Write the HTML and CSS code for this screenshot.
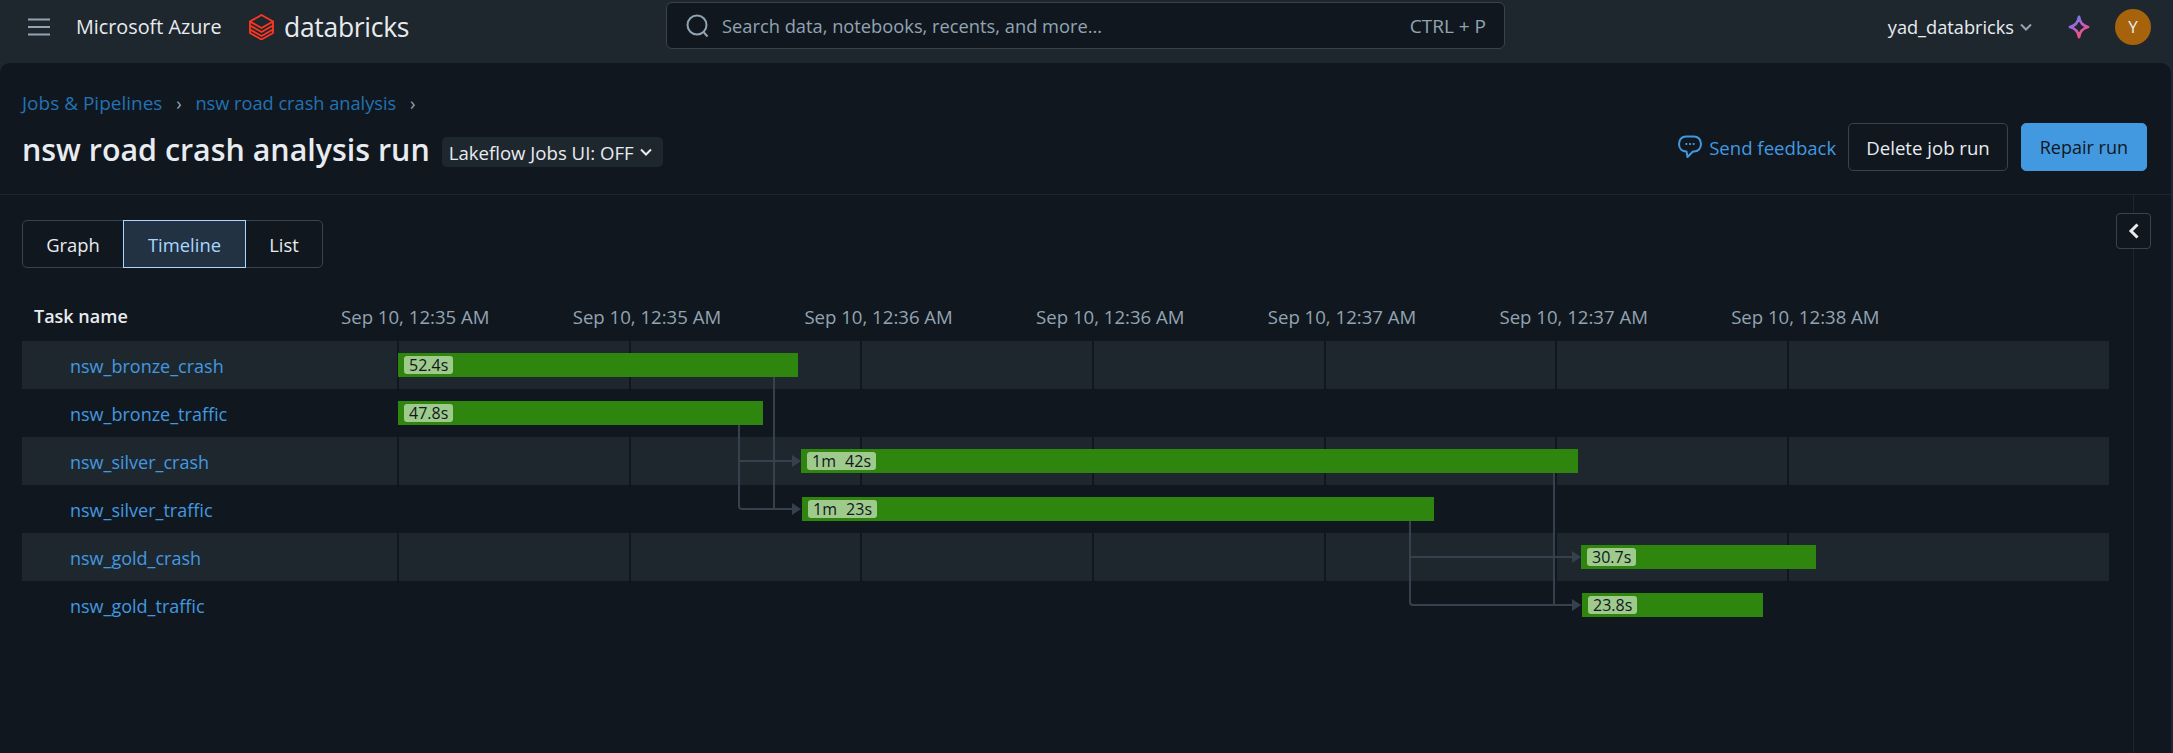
FILE: index.html
```html
<!DOCTYPE html>
<html lang="en">
<head>
    <meta charset="UTF-8">
    <meta name="viewport" content="width=device-width, initial-scale=1.0">
    <title>nsw road crash analysis run</title>
    <link rel="stylesheet" href="styles.css">
</head>
<body>

    <header class="topbar">
        <div class="topbar-left">
            <svg class="menu-icon" width="22" height="18" viewBox="0 0 22 18"><path d="M0 1.500h22M0 9h22M0 16.500h22" stroke="#92a4b3" stroke-width="2" fill="none"/></svg>
            <span class="cloud-name">Microsoft Azure</span>
            <svg class="logo-icon" width="25" height="26" viewBox="0 0 25 26" fill="none" stroke="#ff3621" stroke-width="1.800"><path d="M12.500 1 24 7.500 12.500 14 1 7.500z"/><path d="M1 7.500v4l11.500 6.500L24 11.500v-4"/><path d="M1 11.500v4l11.500 6.500L24 15.500v-4"/><path d="M1 15.500v3.500l11.500 6.500L24 19v-3.500"/></svg>
            <span class="brand-name">databricks</span>
        </div>
        <div class="search">
            <svg width="24" height="24" viewBox="0 0 24 24" fill="none" stroke="#92a4b3" stroke-width="2"><circle cx="11" cy="11" r="9.500"/><path d="m17.500 18 4 4.500"/></svg>
            <span class="search-text">Search data, notebooks, recents, and more...</span>
            <span class="search-key">CTRL + P</span>
        </div>
        <div class="topbar-right">
            <span class="workspace">yad_databricks</span>
            <svg width="12" height="8" viewBox="0 0 12 8" fill="none" stroke="#92a4b3" stroke-width="2"><path d="m1 1.500 5 5 5-5"/></svg>
            <svg class="spark" width="22" height="24" viewBox="0 0 22 24" fill="none" stroke="url(#sparkGrad)" stroke-width="2.800"><defs><linearGradient id="sparkGrad" x1="0" y1="0" x2="0.600" y2="1"><stop offset="0" stop-color="#4a8fe8"/><stop offset="0.500" stop-color="#b45fd8"/><stop offset="1" stop-color="#ff4f6d"/></linearGradient></defs><path d="M11 2c1 5.500 3 8.500 9 10-6 1.500-8 4.500-9 10-1-5.500-3-8.500-9-10 6-1.500 8-4.500 9-10z" stroke-linejoin="round"/></svg>
            <span class="avatar">Y</span>
        </div>
    </header>

    <main class="panel">
        <section class="page-head">
            <div class="breadcrumb">
                <a class="crumb-root">Jobs &amp; Pipelines</a><span class="sep">›</span><a>nsw road crash analysis</a><span class="sep">›</span>
            </div>
            <div class="title-row">
                <h1>nsw road crash analysis run</h1>
                <span class="chip-select">Lakeflow Jobs UI: OFF
                    <svg width="12" height="8" viewBox="0 0 12 8" fill="none" stroke="#e8ecf0" stroke-width="2"><path d="m1 1.500 5 5 5-5"/></svg>
                </span>
                <div class="actions">
                    <a class="feedback">
                        <svg width="24" height="24" viewBox="0 0 24 24" fill="none" stroke="#4299e0" stroke-width="2"><path d="M8 1.500h8c4 0 7 3 7 7.500s-3 7.500-7 7.500h-1l-5.500 5.500-1-5.500C4 16.500 1 13.500 1 9s3-7.500 7-7.500z" stroke-linejoin="round"/><path d="M7.500 9h1.800M11.100 9h1.800M14.700 9h1.800"/></svg>
                        Send feedback
                    </a>
                    <button class="btn">Delete job run</button>
                    <button class="btn btn-primary">Repair run</button>
                </div>
            </div>
        </section>

        <section class="body">
            <div class="content">
                <div class="tabs">
                    <button class="tab tab-graph">Graph</button>
                    <button class="tab tab-timeline active">Timeline</button>
                    <button class="tab tab-list">List</button>
                </div>

                <div class="timeline">
                    <div class="axis">
                        <div class="axis-title">Task name</div>
                        <div class="axis-label">Sep 10, 12:35 AM</div>
                        <div class="axis-label">Sep 10, 12:35 AM</div>
                        <div class="axis-label">Sep 10, 12:36 AM</div>
                        <div class="axis-label">Sep 10, 12:36 AM</div>
                        <div class="axis-label">Sep 10, 12:37 AM</div>
                        <div class="axis-label">Sep 10, 12:37 AM</div>
                        <div class="axis-label">Sep 10, 12:38 AM</div>
                    </div>

                    <div class="rows">
                        <div class="row stripe">
                            <a class="task-name">nsw_bronze_crash</a>
                            <div class="track">
                                <i></i><i></i><i></i><i></i><i></i><i></i><i></i>
                                <div class="bar" style="left: 1px; width: 400px;"><span class="dur">52.4s</span></div>
                            </div>
                        </div>
                        <div class="row">
                            <a class="task-name">nsw_bronze_traffic</a>
                            <div class="track">
                                <div class="bar" style="left: 1px; width: 365px;"><span class="dur">47.8s</span></div>
                            </div>
                        </div>
                        <div class="row stripe">
                            <a class="task-name">nsw_silver_crash</a>
                            <div class="track">
                                <i></i><i></i><i></i><i></i><i></i><i></i><i></i>
                                <div class="bar" style="left: 404px; width: 777px;"><span class="dur">1m 42s</span></div>
                            </div>
                        </div>
                        <div class="row">
                            <a class="task-name">nsw_silver_traffic</a>
                            <div class="track">
                                <div class="bar" style="left: 405px; width: 632px;"><span class="dur">1m 23s</span></div>
                            </div>
                        </div>
                        <div class="row stripe">
                            <a class="task-name">nsw_gold_crash</a>
                            <div class="track">
                                <i></i><i></i><i></i><i></i><i></i><i></i><i></i>
                                <div class="bar" style="left: 1184px; width: 235px;"><span class="dur">30.7s</span></div>
                            </div>
                        </div>
                        <div class="row">
                            <a class="task-name">nsw_gold_traffic</a>
                            <div class="track">
                                <div class="bar" style="left: 1185px; width: 181px;"><span class="dur">23.8s</span></div>
                            </div>
                        </div>

                        <!-- dependency arrows, drawn over the rows (origin is the rows' top left) -->
                        <svg class="links" width="2087" height="288" fill="none" stroke="#36414d" stroke-width="2">
                            <path d="M752 36V168H770"/>
                            <path d="M717 84V165q0 3 3 3H770"/>
                            <path d="M717 120H770"/>
                            <path d="M1532 132V264H1550"/>
                            <path d="M1388 180V261q0 3 3 3H1550"/>
                            <path d="M1388 216H1550"/>
                            <path d="M770 114l9 6-9 6zM770 162l9 6-9 6zM1550 210l9 6-9 6zM1550 258l9 6-9 6z" fill="#36414d" stroke="none"/>
                        </svg>
                    </div>
                </div>
            </div>
            <aside class="side">
                <button class="collapse">
                    <svg width="12" height="16" viewBox="0 0 12 16" fill="none" stroke="#e8ecf0" stroke-width="3"><path d="M9.500 1.500 3 8l6.500 6.500"/></svg>
                </button>
            </aside>
        </section>
    </main>

</body>
</html>
```

FILE: styles.css
```css
* {
    box-sizing: border-box;
}

html, body {
    margin: 0;
    height: 100%;
}

body {
    height: 753px;
    overflow: hidden;
    background-color: #1f272e;
    color: #e8ecf0;
    font-family: "Open Sans", "Noto Sans", Arial, sans-serif;
    font-size: 17px;
    display: flex;
    flex-direction: column;
}

a {
    text-decoration: none;
}

/* top bar */
.topbar {
    height: 63px;
    flex-shrink: 0;
    display: grid;
    grid-template-columns: 666px 839px 1fr;
    align-items: start;
}

.topbar-left {
    display: flex;
    align-items: center;
    height: 53px;
    padding-left: 28px;
}

.cloud-name {
    margin-left: 26px;
    font-size: 19.800px;
    width: 173px;
    white-space: nowrap;
}

.logo-icon {
    flex-shrink: 0;
}

.brand-name {
    margin-left: 10px;
    font-size: 26.500px;
    font-weight: 500;
    letter-spacing: -0.3px;
    color: #e8ecf0;
}

.search {
    margin-top: 2px;
    height: 47px;
    display: flex;
    align-items: center;
    padding: 0 18px 0 19px;
    background-color: #11171e;
    border: 1px solid #37444f;
    border-radius: 6px;
    color: #92a4b3;
    font-size: 18.300px;
}

.search-text {
    margin-left: 12px;
    flex: 1;
}

.search-key {
    font-size: 19px;
}

.topbar-right {
    height: 53px;
    display: flex;
    align-items: center;
    justify-content: flex-end;
    padding-right: 22px;
}

.workspace {
    font-size: 18.200px;
    margin-right: 6px;
}

.spark {
    margin-left: 36px;
}

.avatar {
    width: 36px;
    height: 36px;
    margin-left: 25px;
    border-radius: 50%;
    background-color: #a6630c;
    display: flex;
    align-items: center;
    justify-content: center;
    font-size: 17px;
}

/* main panel */
.panel {
    flex: 1;
    min-height: 0;
    margin-right: 2px;
    background-color: #11171e;
    border-radius: 10px 10px 0 0;
    display: flex;
    flex-direction: column;
}

.page-head {
    height: 132px;
    padding: 25px 24px 0 22px;
    border-bottom: 1px solid #1f272e;
    flex-shrink: 0;
}

.breadcrumb {
    display: flex;
    align-items: center;
    height: 30px;
    font-size: 18.200px;
}

.breadcrumb a {
    color: #2272b4;
}

.breadcrumb .crumb-root {
    font-size: 19px;
}

.breadcrumb .sep {
    width: 33px;
    text-align: center;
    color: #92a4b3;
}

.title-row {
    display: flex;
    align-items: center;
    height: 48px;
    margin-top: 7px;
}

h1 {
    margin: 0;
    font-size: 30.400px;
    font-weight: 600;
    color: #e8ecf0;
}

.chip-select {
    margin-left: 12px;
    margin-top: 6px;
    height: 30px;
    padding: 0 11px 0 7px;
    display: flex;
    align-items: center;
    gap: 6px;
    background-color: #1f272e;
    border-radius: 5px;
    font-size: 18.600px;
}

.actions {
    margin-left: auto;
    margin-top: -4px;
    display: flex;
    align-items: center;
}

.feedback {
    display: flex;
    align-items: center;
    gap: 7px;
    margin-right: 12px;
    color: #4299e0;
    font-size: 18.600px;
}

.btn {
    height: 48px;
    padding: 0 17px;
    background-color: transparent;
    border: 1px solid #37444f;
    border-radius: 5px;
    color: #e8ecf0;
    font: inherit;
    font-size: 18.600px;
}

.btn-primary {
    margin-left: 13px;
    padding: 0 18px;
    font-size: 18px;
    background-color: #4299e0;
    border-color: #4299e0;
    color: #11171e;
}

/* tabs + timeline */
.body {
    flex: 1;
    min-height: 0;
    display: flex;
}

.content {
    width: 2109px;
    padding: 25px 0 0 22px;
}

.tabs {
    display: flex;
    height: 48px;
}

.tab {
    background-color: transparent;
    border: 1px solid #37444f;
    margin-left: -1px;
    color: #e8ecf0;
    font: inherit;
    font-size: 18.400px;
}

.tab-graph {
    width: 102px;
    margin-left: 0;
    border-radius: 5px 0 0 5px;
}

.tab-timeline {
    width: 123px;
}

.tab-list {
    width: 78px;
    border-radius: 0 5px 5px 0;
}

.tab.active {
    position: relative;
    background-color: #223243;
    border-color: #a8d8ff;
    color: #a8d8ff;
}

.timeline {
    margin-top: 25px;
}

.axis {
    display: flex;
    align-items: center;
    height: 48px;
    padding-bottom: 2px;
}

.axis-title {
    width: 319px;
    padding-left: 12px;
    font-size: 18px;
    font-weight: 600;
}

.axis-label {
    width: 231.700px;
    font-size: 18.600px;
    color: #92a4b3;
}

.rows {
    position: relative;
}

.row {
    display: flex;
    height: 48px;
}

.stripe {
    background-color: #1f272e;
}

.task-name {
    width: 375px;
    padding-left: 48px;
    line-height: 50px;
    color: #4299e0;
    font-size: 18px;
}

.track {
    position: relative;
    flex: 1;
    display: flex;
}

.track i {
    width: 231.700px;
    border-left: 2px solid #11171e;
}

.track i:last-of-type {
    flex: 1;
}

.bar {
    position: absolute;
    top: 12px;
    height: 24px;
    padding: 3px 6px;
    background-color: #2f860f;
}

.dur {
    display: block;
    width: max-content;
    height: 18px;
    padding: 0 5px;
    line-height: 18px;
    background-color: #9ecb8c;
    border-radius: 3px;
    color: #11171e;
    font-size: 16px;
    word-spacing: 5px;
}

.links {
    position: absolute;
    top: 0;
    left: 0;
    pointer-events: none;
}

.side {
    width: 62px;
    padding-top: 18px;
    position: relative;
}

.side::before {
    content: "";
    position: absolute;
    top: 0;
    bottom: 0;
    left: 24px;
    border-left: 1px solid #1f272e;
}

.collapse {
    position: relative;
    width: 35px;
    height: 36px;
    margin-left: 7px;
    display: flex;
    align-items: center;
    justify-content: center;
    padding: 0;
    background-color: #11171e;
    border: 1px solid #37444f;
    border-radius: 4px;
}
```
